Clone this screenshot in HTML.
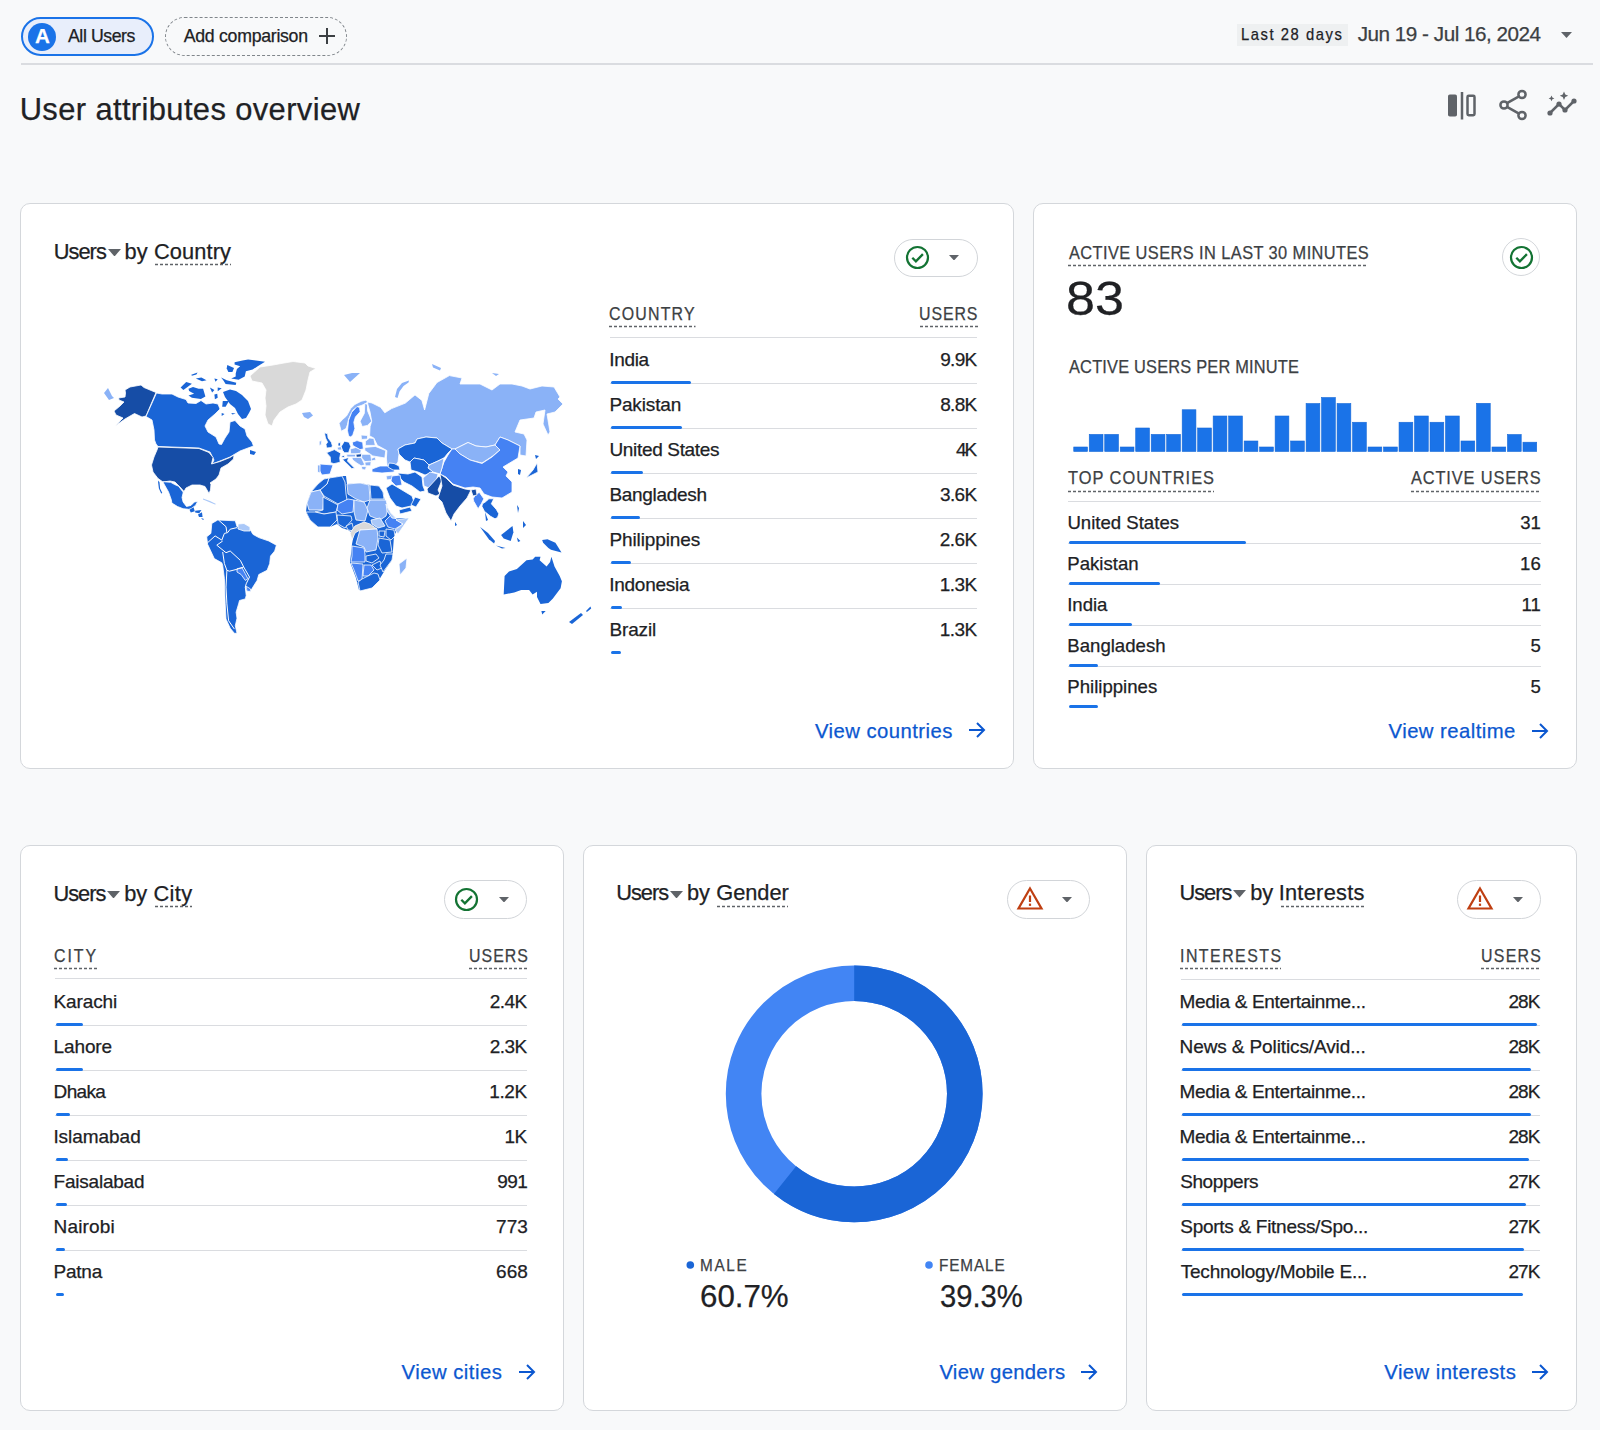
<!DOCTYPE html>
<html><head><meta charset="utf-8"><style>
html,body{margin:0;padding:0}
body{width:1600px;height:1430px;position:relative;overflow:hidden;background:#f8f9fa;font-family:"Liberation Sans",sans-serif}
.t{position:absolute;white-space:nowrap;line-height:1;-webkit-text-stroke:0.25px currentColor}
.r{position:absolute;box-sizing:content-box}
.card{position:absolute;background:#fff;border:1px solid #d4d7db;border-radius:10px}
svg{display:block}
</style></head><body>

<div class="r" style="left:21px;top:17px;width:129px;height:35px;border:2px solid #1a73e8;border-radius:20px;background:#e8eefb"></div>
<div class="r" style="left:28px;top:22.5px;width:28px;height:28px;border-radius:50%;background:#1a73e8"></div>
<div class="t" style="left:34.98px;top:26.00px;font-size:20.60px;color:#fff;font-weight:700;">A</div>
<div class="t" style="left:68.00px;top:28.00px;font-size:17.70px;color:#202124;letter-spacing:-0.423px;">All Users</div>
<div class="r" style="left:165px;top:17px;width:180px;height:37px;border:1.3px dashed #80868b;border-radius:20px"></div>
<div class="t" style="left:183.75px;top:28.00px;font-size:17.70px;color:#202124;letter-spacing:-0.272px;">Add comparison</div>
<svg class="r" style="left:318px;top:27px" width="18" height="18"><path d="M9 1V17M1 9H17" stroke="#3c4043" stroke-width="2"/></svg>
<div class="r" style="left:21px;top:63px;width:1572px;height:2px;background:#dadce0"></div>
<div class="r" style="left:1237px;top:24px;width:111px;height:22px;background:#eef0f1"></div>
<div class="t" style="left:1241.32px;top:26.00px;font-size:16.40px;color:#202124;letter-spacing:1.738px;transform:scaleX(0.9000);transform-origin:0 0;">Last 28 days</div>
<div class="t" style="left:1357.69px;top:24.00px;font-size:20.70px;color:#3c4043;letter-spacing:-0.490px;">Jun 19 - Jul 16, 2024</div>
<svg class="r" style="left:1560.8px;top:32.2px" width="11" height="6"><path d="M0 0H11L5.5 6Z" fill="#5f6368"/></svg>
<div class="t" style="left:19.68px;top:95.00px;font-size:30.90px;color:#202124;letter-spacing:0.381px;">User attributes overview</div>
<svg class="r" style="left:1446px;top:90px" width="32" height="32" viewBox="0 0 32 32"><rect x="2" y="4.5" width="9" height="22" rx="1.8" fill="#5f6368"/><rect x="14.75" y="2" width="2.5" height="27.5" fill="#5f6368"/><rect x="21.5" y="5.75" width="7" height="19.5" rx="1.2" fill="none" stroke="#5f6368" stroke-width="2.5"/></svg>
<svg class="r" style="left:1498px;top:89px" width="30" height="32" viewBox="0 0 30 32"><circle cx="24" cy="5.5" r="3.6" fill="none" stroke="#5f6368" stroke-width="2.5"/><circle cx="6" cy="16" r="3.6" fill="none" stroke="#5f6368" stroke-width="2.5"/><circle cx="24" cy="26.5" r="3.6" fill="none" stroke="#5f6368" stroke-width="2.5"/><path d="M9 14.2L21 7.3M9 17.8L21 24.7" stroke="#5f6368" stroke-width="2.5"/></svg>
<svg class="r" style="left:1546px;top:91px" width="36" height="28" viewBox="0 0 36 28"><path d="M4 22L13 13L19 19L28 10" fill="none" stroke="#5f6368" stroke-width="2.5"/><circle cx="4" cy="22" r="2.6" fill="#5f6368"/><circle cx="13" cy="13" r="2.6" fill="#5f6368"/><circle cx="19" cy="19" r="2.6" fill="#5f6368"/><circle cx="28" cy="10" r="2.6" fill="#5f6368"/><path d="M5.5 4.5l0.9 2 2 0.9-2 0.9-0.9 2-0.9-2-2-0.9 2-0.9z" fill="#5f6368"/><path d="M18 0.5l1.3 2.9 2.9 1.3-2.9 1.3-1.3 2.9-1.3-2.9-2.9-1.3 2.9-1.3z" fill="#5f6368"/></svg>
<div class="card" style="left:20px;top:203px;width:992px;height:564px"></div>
<div class="card" style="left:1033px;top:203px;width:542px;height:564px"></div>
<div class="card" style="left:20px;top:845px;width:542px;height:564px"></div>
<div class="card" style="left:583px;top:845px;width:542px;height:564px"></div>
<div class="card" style="left:1146px;top:845px;width:429px;height:564px"></div>
<svg class="r" style="left:0;top:0" width="1600" height="1430"><polygon points="311.0,492.0 307.0,503.0 306.0,512.0 310.0,520.0 318.0,527.0 330.0,527.0 337.0,524.0 342.0,528.0 348.0,530.0 354.0,534.0 352.0,544.0 351.0,554.0 350.0,562.0 356.0,578.0 359.0,590.0 370.0,588.0 379.0,580.0 385.0,570.0 392.0,560.0 393.0,550.0 394.0,536.0 396.0,532.0 409.0,518.0 396.0,518.5 391.4,514.0 388.0,508.5 384.5,499.6 383.0,492.0 379.0,486.0 370.0,485.0 360.0,483.0 347.0,484.0 346.0,476.0 342.0,476.0 329.0,478.0 324.0,479.0 318.0,484.0" fill="#1a65d6"/><polygon points="125.0,390.0 130.0,387.0 141.0,385.0 144.0,387.5 156.0,392.5 146.0,416.0 142.0,417.0 134.5,413.5 125.0,419.0 115.0,426.0 123.0,418.0 116.0,415.0 114.0,411.0 120.0,406.0 124.0,402.0 119.0,400.0 118.5,398.0 125.0,397.0 125.5,393.0" fill="#164da6" stroke="#fff" stroke-width="0.8" stroke-linejoin="round"/><polygon points="156.5,393.0 162.0,394.0 172.0,394.0 178.0,397.0 186.0,399.5 188.0,403.0 196.0,403.5 201.0,400.5 206.0,404.0 213.0,403.0 218.0,404.0 220.0,409.0 215.0,414.0 208.0,420.0 205.0,426.0 208.0,432.0 216.0,437.0 219.0,444.0 221.5,444.5 225.0,438.0 229.0,432.0 230.0,422.0 235.0,420.5 240.0,426.0 245.0,429.0 247.0,436.0 252.0,442.0 253.5,446.0 248.0,448.0 240.0,451.0 235.0,454.0 230.0,457.0 220.0,461.0 212.0,464.0 214.0,460.0 210.0,452.0 199.0,448.0 158.0,446.5 156.0,444.0 154.5,440.0 154.0,430.0 152.0,420.0 146.0,416.5" fill="#1a65d6" stroke="#fff" stroke-width="0.8" stroke-linejoin="round"/><polygon points="158.0,447.0 199.0,448.5 209.0,452.5 213.0,457.5 211.5,464.0 220.0,461.5 230.0,457.5 234.0,455.0 233.5,459.0 228.0,464.0 221.0,468.0 219.0,475.0 216.0,479.0 210.0,483.0 211.0,484.0 210.5,490.0 209.0,493.5 207.0,490.0 205.0,486.5 200.0,485.0 192.0,485.0 186.0,488.0 184.0,491.5 180.0,487.0 175.0,482.0 170.0,481.0 163.0,482.0 158.0,478.5 153.0,472.0 151.5,465.0 154.0,457.0 157.0,450.0" fill="#164da6" stroke="#fff" stroke-width="0.8" stroke-linejoin="round"/><polygon points="162.9,481.7 170.7,482.3 174.7,484.6 178.6,486.2 182.0,490.7 183.1,491.9 183.1,493.0 182.0,497.5 183.1,502.0 186.5,506.5 191.0,505.4 194.4,502.0 197.7,501.4 195.5,505.4 191.0,508.7 188.7,509.3 183.1,508.7 177.5,506.5 171.9,503.1 171.3,499.7 168.5,491.9 164.0,484.0" fill="#1a65d6" stroke="#fff" stroke-width="0.8" stroke-linejoin="round"/><polygon points="158.4,480.6 159.5,482.3 160.1,488.5 162.3,493.0 161.2,493.6 158.9,488.5 158.1,482.3" fill="#1a65d6"/><polygon points="189.5,509.8 193.5,507.2 194.8,511.2 190.8,512.6" fill="#1a65d6"/><polygon points="195.2,510.8 201.5,510.0 199.2,513.2 195.2,512.6" fill="#1a65d6"/><polygon points="198.0,514.6 202.0,512.3 202.6,517.0 199.0,517.0" fill="#1a65d6"/><polygon points="201.0,518.0 204.0,519.0 203.0,520.0" fill="#1a65d6"/><polygon points="203.0,498.5 210.0,501.0 216.0,504.0 215.0,504.6 209.0,502.0 203.0,499.4" fill="#aac8f8"/><polygon points="250.0,376.0 260.0,367.0 273.0,365.0 284.0,363.0 293.0,361.5 305.0,363.0 308.0,366.0 316.0,368.5 310.0,372.0 308.0,380.0 306.0,390.0 302.0,400.0 296.0,404.0 288.0,407.0 280.0,412.0 274.0,420.0 272.0,426.0 268.0,424.0 265.0,415.0 266.0,406.0 265.0,398.0 266.0,390.0 262.0,383.0 252.0,381.0" fill="#d9d9d9" stroke="#fff" stroke-width="0.8" stroke-linejoin="round"/><polygon points="234.6,362.3 242.5,360.6 248.1,359.5 265.0,361.7 257.7,366.2 252.6,369.6 245.9,371.3 244.7,376.4 238.6,379.7 231.2,378.6 235.7,376.4 235.7,373.6 236.9,369.1 240.2,366.2 234.6,364.6" fill="#1a65d6"/><polygon points="227.3,365.1 234.0,367.9 232.4,371.9 228.4,371.9 226.7,368.5" fill="#1a65d6"/><polygon points="223.0,392.0 230.0,389.5 236.0,391.0 242.0,395.0 248.0,401.0 251.0,409.0 249.0,413.0 246.0,418.0 242.0,419.0 238.0,414.0 235.0,408.0 230.0,404.0 225.0,397.0" fill="#1a65d6"/><polygon points="188.5,388.7 193.0,387.1 198.6,388.7 203.1,388.7 205.4,396.6 200.9,398.9 191.9,397.7 188.5,395.5 194.1,393.8 189.1,391.0" fill="#1a65d6"/><polygon points="180.6,387.6 186.2,382.0 191.9,383.7 183.4,389.9" fill="#1a65d6"/><polygon points="191.3,374.7 197.5,372.4 196.4,374.6 191.9,375.8" fill="#1a65d6"/><polygon points="195.8,378.6 201.4,377.5 206.5,380.3 202.0,381.2" fill="#1a65d6"/><polygon points="214.4,378.6 217.7,379.2 215.5,381.8" fill="#1a65d6"/><polygon points="221.1,377.5 226.7,380.3 236.3,382.8 235.7,385.0 225.6,384.0 223.6,380.8" fill="#1a65d6"/><polygon points="209.9,387.6 214.4,389.9 212.1,392.5" fill="#1a65d6"/><polygon points="217.7,387.6 221.7,388.2 217.7,391.3" fill="#1a65d6"/><polygon points="214.4,394.4 217.2,393.8 217.7,397.7 214.9,399.2" fill="#1a65d6"/><polygon points="222.8,401.1 229.0,401.1 225.6,406.7 222.2,406.7" fill="#1a65d6"/><polygon points="221.7,412.9 224.5,414.1 221.7,415.9" fill="#1a65d6"/><polygon points="231.2,412.9 235.7,413.5 232.4,414.6" fill="#1a65d6"/><polygon points="250.0,450.0 256.0,452.0 254.0,455.0 250.0,454.0" fill="#1a65d6"/><polygon points="104.0,393.0 108.0,388.0 112.0,396.0 114.0,398.0 109.0,400.0" fill="#8ab2f7"/><polygon points="211.8,523.4 217.7,520.0 235.3,520.8 237.0,526.7 240.3,525.0 249.5,528.4 252.9,534.3 258.8,537.6 268.8,541.0 276.4,545.2 274.7,551.0 270.5,556.1 269.7,563.6 267.1,570.3 258.8,574.5 257.1,580.4 252.9,587.1 250.4,591.3 246.2,590.5 245.3,587.1 246.2,595.5 245.3,598.9 239.5,600.5 238.6,603.9 236.1,612.3 237.0,618.2 235.3,625.7 237.0,633.3 234.4,633.3 230.2,628.2 226.0,619.0 225.2,603.9 224.4,578.7 222.7,565.3 221.8,562.8 214.3,558.6 207.6,544.3 206.7,536.8 210.9,533.4" fill="#1a65d6" stroke="#fff" stroke-width="0.8" stroke-linejoin="round"/><polygon points="238.0,524.0 244.0,523.5 250.0,527.0 250.0,531.0 244.0,531.0 238.0,529.0" fill="#aac8f8" stroke="#fff" stroke-width="0.8" stroke-linejoin="round"/><polygon points="237.0,568.7 242.0,567.8 245.3,573.7 247.9,578.7 245.3,580.4 241.1,574.5 237.0,572.0" fill="#4582f3" stroke="#fff" stroke-width="0.8" stroke-linejoin="round"/><polygon points="246.2,586.3 250.4,588.8 250.8,591.3 247.0,591.3" fill="#4582f3" stroke="#fff" stroke-width="0.8" stroke-linejoin="round"/><polygon points="339.1,423.3 342.3,419.7 346.5,416.0 350.7,408.6 354.9,404.4 361.2,401.3 365.4,400.2 368.0,401.8 364.8,403.9 361.2,405.5 358.0,406.5 352.8,410.2 348.6,419.1 347.5,424.4 346.0,428.6 341.2,431.2" fill="#8ab2f7" stroke="#fff" stroke-width="0.8" stroke-linejoin="round"/><polygon points="347.5,430.7 348.6,420.2 351.7,412.3 357.0,406.5 359.6,407.6 360.1,411.8 355.4,417.0 353.8,422.3 354.9,428.6 352.8,434.9 350.7,437.0 348.6,435.9" fill="#4582f3" stroke="#fff" stroke-width="0.8" stroke-linejoin="round"/><polygon points="360.1,421.2 364.3,413.4 364.8,403.4 367.5,404.4 367.5,410.7 370.1,417.0 371.7,421.2 367.5,425.4 362.2,426.5" fill="#8ab2f7" stroke="#fff" stroke-width="0.8" stroke-linejoin="round"/><polygon points="324.4,432.8 327.6,433.8 328.1,438.0 331.3,442.2 332.3,445.4 331.8,447.5 326.5,448.0 326.0,444.3 327.6,442.2 325.5,438.0" fill="#1a65d6" stroke="#fff" stroke-width="0.8" stroke-linejoin="round"/><polygon points="319.2,441.2 321.8,440.6 321.3,444.8 319.2,445.4" fill="#8ab2f7" stroke="#fff" stroke-width="0.8" stroke-linejoin="round"/><polygon points="367.5,402.0 372.0,403.0 380.6,407.3 384.8,412.8 391.6,408.6 405.4,403.1 415.0,394.9 421.9,400.4 424.6,410.0 428.8,393.5 437.0,382.5 449.4,375.6 462.0,378.0 460.0,384.0 480.0,384.0 492.0,390.0 500.0,384.0 512.0,384.0 522.0,386.0 530.0,389.0 542.0,386.0 554.0,387.0 560.0,397.0 558.0,399.0 563.0,404.0 555.0,412.0 547.0,414.0 550.0,432.0 548.0,435.0 543.0,424.0 545.0,410.0 536.0,412.0 534.0,418.0 520.0,420.0 515.0,432.0 524.0,434.0 527.0,440.0 526.0,456.0 520.0,455.0 520.0,446.0 508.0,440.0 500.0,437.0 495.0,445.0 486.0,447.0 476.0,446.0 468.0,442.5 455.0,449.0 452.0,449.0 442.0,443.0 437.0,438.0 426.0,437.0 417.0,439.0 415.0,443.0 405.0,445.0 398.0,449.0 399.0,454.0 398.0,462.0 392.0,470.0 387.4,468.5 386.4,458.0 386.9,450.6 377.4,445.4 373.8,438.0 369.6,435.9 370.1,426.5 371.7,421.2 370.0,412.0 368.0,405.0" fill="#8ab2f7" stroke="#fff" stroke-width="0.8" stroke-linejoin="round"/><polygon points="432.0,364.0 441.0,368.0 440.0,370.5 433.0,367.5" fill="#8ab2f7"/><polygon points="492.0,373.0 499.0,374.0 496.0,376.0" fill="#8ab2f7"/><polygon points="344.0,375.0 352.0,373.0 360.0,373.0 350.0,382.0" fill="#8ab2f7"/><polygon points="302.0,413.0 310.0,412.0 313.0,415.5 308.0,419.0 304.0,417.0" fill="#8ab2f7"/><polygon points="341.2,446.4 344.4,441.2 349.1,442.2 350.7,446.4 348.6,452.7 344.4,452.7 342.3,450.1" fill="#1a65d6" stroke="#fff" stroke-width="0.8" stroke-linejoin="round"/><polygon points="326.5,452.7 334.4,449.6 340.7,453.2 339.7,458.0 340.2,462.2 333.9,463.7 330.7,462.7 330.2,456.9" fill="#1a65d6" stroke="#fff" stroke-width="0.8" stroke-linejoin="round"/><polygon points="352.3,442.2 357.0,440.6 362.7,442.2 363.3,449.0 359.6,449.6 352.8,445.4" fill="#4582f3" stroke="#fff" stroke-width="0.8" stroke-linejoin="round"/><polygon points="365.4,441.2 369.6,438.0 373.8,438.5 375.3,445.4 365.4,445.4" fill="#8ab2f7" stroke="#fff" stroke-width="0.8" stroke-linejoin="round"/><polygon points="364.8,447.5 375.3,446.4 385.8,450.6 384.8,458.0 372.7,455.9 364.8,450.6" fill="#8ab2f7" stroke="#fff" stroke-width="0.8" stroke-linejoin="round"/><polygon points="342.3,459.5 348.6,457.4 347.5,461.1 354.9,468.5 351.7,468.5 345.4,462.2" fill="#1a65d6" stroke="#fff" stroke-width="0.8" stroke-linejoin="round"/><polygon points="320.0,464.0 333.0,465.0 330.0,474.0 322.0,475.0 319.0,470.0" fill="#4582f3" stroke="#fff" stroke-width="0.8" stroke-linejoin="round"/><polygon points="317.5,465.0 320.0,465.0 320.0,473.0 317.5,472.0" fill="#8ab2f7" stroke="#fff" stroke-width="0.8" stroke-linejoin="round"/><polygon points="398.0,449.0 405.0,445.0 415.0,443.0 417.0,439.0 426.0,437.0 437.0,438.0 442.0,443.0 452.0,449.0 448.0,453.0 444.0,458.0 438.0,461.0 429.0,465.0 424.0,460.0 414.0,458.0 410.0,462.0 405.0,460.0 399.0,454.0" fill="#1a65d6" stroke="#fff" stroke-width="0.8" stroke-linejoin="round"/><polygon points="455.0,449.0 468.0,442.5 476.0,446.0 486.0,447.0 495.0,445.0 500.0,450.0 492.0,456.5 482.0,463.0 470.0,460.0 460.0,454.0" fill="#8ab2f7" stroke="#fff" stroke-width="0.8" stroke-linejoin="round"/><polygon points="452.0,449.0 455.0,449.0 460.0,454.0 470.0,460.0 482.0,463.5 492.0,457.0 500.0,450.0 495.0,445.0 500.0,437.0 508.0,440.0 520.0,446.0 518.0,458.0 508.0,464.0 503.0,467.0 508.0,472.0 506.0,476.0 512.0,482.0 512.0,492.0 502.0,498.0 492.0,497.0 484.0,494.0 480.0,488.0 473.0,487.0 465.0,488.0 453.0,484.0 446.0,477.0 440.0,474.0 442.0,468.0 444.0,462.0 448.0,455.0" fill="#4582f3" stroke="#fff" stroke-width="0.8" stroke-linejoin="round"/><polygon points="429.0,465.0 438.0,461.0 444.0,458.0 442.0,468.0 440.0,474.0 433.0,472.0 428.0,468.0" fill="#8ab2f7" stroke="#fff" stroke-width="0.8" stroke-linejoin="round"/><polygon points="410.0,462.0 414.0,458.0 424.0,460.0 429.0,465.0 428.0,468.0 433.0,472.0 425.0,475.0 418.0,472.0 411.0,470.0" fill="#1a65d6" stroke="#fff" stroke-width="0.8" stroke-linejoin="round"/><polygon points="423.0,478.0 430.0,472.0 438.0,474.0 436.0,482.0 429.0,488.0 424.0,486.0" fill="#8ab2f7" stroke="#fff" stroke-width="0.8" stroke-linejoin="round"/><polygon points="427.0,489.0 439.0,476.0 442.0,480.0 438.0,490.0 440.0,494.0 436.0,496.0 428.0,493.0" fill="#164da6" stroke="#fff" stroke-width="0.8" stroke-linejoin="round"/><polygon points="440.0,474.0 446.0,478.0 453.0,485.0 465.0,489.0 471.0,490.0 467.0,498.0 460.0,506.0 454.0,514.0 451.0,521.0 446.0,513.0 442.0,502.0 438.0,498.0 440.0,492.0 442.0,486.0" fill="#164da6" stroke="#fff" stroke-width="0.8" stroke-linejoin="round"/><polygon points="398.0,473.0 408.0,474.0 415.0,472.0 422.0,477.0 423.0,486.0 425.0,491.0 420.0,492.0 412.0,486.0 404.0,482.0 399.0,477.0" fill="#1a65d6" stroke="#fff" stroke-width="0.8" stroke-linejoin="round"/><polygon points="386.0,488.0 392.0,484.0 402.0,490.0 412.0,496.0 414.0,502.0 411.0,506.0 402.0,508.0 396.0,506.0 390.0,498.0" fill="#1a65d6" stroke="#fff" stroke-width="0.8" stroke-linejoin="round"/><polygon points="399.0,510.0 410.0,507.0 412.0,511.0 400.0,514.0" fill="#1a65d6" stroke="#fff" stroke-width="0.8" stroke-linejoin="round"/><polygon points="415.0,497.0 421.0,499.0 416.0,507.0 411.0,505.0" fill="#1a65d6" stroke="#fff" stroke-width="0.8" stroke-linejoin="round"/><polygon points="372.0,469.0 380.0,466.0 390.0,466.0 395.0,469.0 394.0,472.0 382.0,473.0 372.0,472.0" fill="#4582f3" stroke="#fff" stroke-width="0.8" stroke-linejoin="round"/><polygon points="386.0,476.0 392.0,475.0 393.0,479.0 387.0,480.0" fill="#8ab2f7" stroke="#fff" stroke-width="0.8" stroke-linejoin="round"/><polygon points="392.0,476.0 400.0,475.0 402.0,485.0 396.0,486.0 391.0,481.0" fill="#4582f3" stroke="#fff" stroke-width="0.8" stroke-linejoin="round"/><polygon points="370.0,485.0 379.0,486.0 383.0,492.0 384.0,499.0 371.0,499.0" fill="#1a65d6" stroke="#fff" stroke-width="0.8" stroke-linejoin="round"/><polygon points="347.0,484.0 360.0,483.0 369.0,485.0 370.0,500.0 364.0,502.0 356.0,499.0 348.0,494.0" fill="#8ab2f7" stroke="#fff" stroke-width="0.8" stroke-linejoin="round"/><polygon points="329.0,478.0 342.0,476.0 345.0,482.0 346.0,494.0 347.0,500.0 338.0,504.0 324.0,496.0 320.0,490.0 327.0,484.0" fill="#1a65d6" stroke="#fff" stroke-width="0.8" stroke-linejoin="round"/><polygon points="318.0,484.0 324.0,479.0 329.0,478.0 327.0,484.0 320.0,490.0 311.0,492.0" fill="#1a65d6" stroke="#fff" stroke-width="0.8" stroke-linejoin="round"/><polygon points="307.0,503.0 311.0,492.0 320.0,490.0 324.0,497.0 323.0,510.0 309.0,510.0" fill="#8ab2f7" stroke="#fff" stroke-width="0.8" stroke-linejoin="round"/><polygon points="323.0,497.0 338.0,505.0 336.0,512.0 324.0,514.0 315.0,512.0 323.0,510.0" fill="#1a65d6" stroke="#fff" stroke-width="0.8" stroke-linejoin="round"/><polygon points="338.0,504.0 348.0,499.0 354.0,500.0 353.0,512.0 342.0,514.0 337.0,510.0" fill="#4582f3" stroke="#fff" stroke-width="0.8" stroke-linejoin="round"/><polygon points="354.0,500.0 364.0,502.0 368.0,510.0 365.0,521.0 356.0,520.0 354.0,512.0" fill="#8ab2f7" stroke="#fff" stroke-width="0.8" stroke-linejoin="round"/><polygon points="370.0,500.0 386.0,500.0 388.0,508.0 386.0,516.0 380.0,520.0 370.0,516.0 367.0,508.0" fill="#8ab2f7" stroke="#fff" stroke-width="0.8" stroke-linejoin="round"/><polygon points="371.0,520.0 380.0,518.0 385.0,526.0 378.0,528.0 372.0,524.0" fill="#aac8f8" stroke="#fff" stroke-width="0.8" stroke-linejoin="round"/><polygon points="385.0,521.0 392.0,514.0 397.0,520.0 403.0,524.0 395.0,529.0 388.0,527.0" fill="#4582f3" stroke="#fff" stroke-width="0.8" stroke-linejoin="round"/><polygon points="396.0,520.0 409.0,518.0 398.0,534.0 395.0,530.0 403.0,524.0" fill="#aac8f8" stroke="#fff" stroke-width="0.8" stroke-linejoin="round"/><polygon points="306.0,512.0 315.0,512.0 324.0,514.0 336.0,512.0 337.0,520.0 330.0,527.0 318.0,527.0 310.0,520.0" fill="#1a65d6" stroke="#fff" stroke-width="0.8" stroke-linejoin="round"/><polygon points="337.0,515.0 351.0,516.0 352.0,520.0 345.0,528.0 338.0,524.0" fill="#1a65d6" stroke="#fff" stroke-width="0.8" stroke-linejoin="round"/><polygon points="346.0,526.0 352.0,523.0 354.0,531.0 348.0,530.0" fill="#1a65d6" stroke="#fff" stroke-width="0.8" stroke-linejoin="round"/><polygon points="355.0,526.0 364.0,522.0 370.0,524.0 377.0,529.0 360.0,530.0 355.0,533.0 352.0,540.0 350.0,533.0" fill="#d9d9d9" stroke="#fff" stroke-width="0.8" stroke-linejoin="round"/><polygon points="360.0,530.0 377.0,529.0 378.0,538.0 376.0,550.0 366.0,552.0 364.0,547.0 356.0,544.0" fill="#8ab2f7" stroke="#fff" stroke-width="0.8" stroke-linejoin="round"/><polygon points="352.0,546.0 364.0,548.0 365.0,554.0 365.0,562.0 351.0,562.0 352.0,556.0" fill="#4582f3" stroke="#fff" stroke-width="0.8" stroke-linejoin="round"/><polygon points="351.0,563.0 363.0,564.0 362.0,580.0 358.0,581.0 354.0,570.0" fill="#4582f3" stroke="#fff" stroke-width="0.8" stroke-linejoin="round"/><polygon points="364.0,565.0 371.0,565.0 374.0,570.0 368.0,576.0 363.0,576.0" fill="#4582f3" stroke="#fff" stroke-width="0.8" stroke-linejoin="round"/><polygon points="358.0,582.0 362.0,579.0 374.0,573.0 378.0,574.0 380.0,580.0 372.0,588.0 360.0,591.0" fill="#1a65d6" stroke="#fff" stroke-width="0.8" stroke-linejoin="round"/><polygon points="366.0,556.0 376.0,554.0 379.0,558.0 372.0,563.0 366.0,561.0" fill="#1a65d6" stroke="#fff" stroke-width="0.8" stroke-linejoin="round"/><polygon points="372.0,565.0 380.0,561.0 382.0,568.0 377.0,570.0" fill="#1a65d6" stroke="#fff" stroke-width="0.8" stroke-linejoin="round"/><polygon points="386.0,554.0 393.0,554.0 392.0,560.0 383.0,572.0 380.0,565.0 384.0,560.0" fill="#1a65d6" stroke="#fff" stroke-width="0.8" stroke-linejoin="round"/><polygon points="379.0,538.0 390.0,540.0 392.0,552.0 382.0,553.0 378.0,545.0" fill="#1a65d6" stroke="#fff" stroke-width="0.8" stroke-linejoin="round"/><polygon points="386.0,529.0 394.0,530.0 395.0,536.0 391.0,540.0 386.0,536.0" fill="#1a65d6" stroke="#fff" stroke-width="0.8" stroke-linejoin="round"/><polygon points="379.0,531.0 385.0,531.0 384.0,537.0 379.0,536.0" fill="#1a65d6" stroke="#fff" stroke-width="0.8" stroke-linejoin="round"/><polygon points="399.0,564.0 407.0,558.0 406.0,568.0 400.0,575.0" fill="#8ab2f7" stroke="#fff" stroke-width="0.8" stroke-linejoin="round"/><polygon points="473.1,498.8 476.0,494.0 479.4,492.5 483.8,498.8 481.3,503.8 478.1,508.8 473.8,501.3" fill="#4582f3" stroke="#fff" stroke-width="0.8" stroke-linejoin="round"/><polygon points="482.5,503.8 486.3,501.3 488.8,498.8 493.8,498.8 491.3,503.8 496.3,509.4 498.8,513.8 497.5,517.5 495.0,518.8 490.6,516.3 484.4,511.3 481.9,506.3" fill="#1a65d6" stroke="#fff" stroke-width="0.8" stroke-linejoin="round"/><polygon points="485.0,512.0 488.0,520.0 486.0,521.0" fill="#1a65d6"/><polygon points="533.0,470.0 537.0,463.0 538.0,472.0 526.0,478.0" fill="#1a65d6" stroke="#fff" stroke-width="0.8" stroke-linejoin="round"/><polygon points="535.0,455.0 539.0,456.0 536.0,459.0" fill="#1a65d6"/><polygon points="518.0,469.0 521.0,470.0 520.0,475.0 518.0,474.0" fill="#1a65d6"/><polygon points="517.0,505.0 519.0,508.0 518.0,513.0" fill="#1a65d6"/><polygon points="523.0,521.0 526.0,525.0 523.0,528.0" fill="#1a65d6"/><polygon points="480.1,527.0 488.0,533.1 495.0,541.0 494.1,543.6 488.9,539.2" fill="#1a65d6"/><polygon points="495.9,545.4 505.5,548.0 502.0,548.5" fill="#1a65d6"/><polygon points="501.1,534.9 512.5,526.1 513.4,532.2 510.7,541.0 503.7,538.4" fill="#1a65d6"/><polygon points="516.9,537.5 520.4,541.0 518.0,542.0" fill="#1a65d6"/><polygon points="542.2,540.1 547.5,539.2 555.4,542.7 561.5,552.4 551.0,549.7 548.4,548.0 543.1,542.7" fill="#1a65d6"/><polygon points="455.0,522.0 457.0,525.0 455.0,526.0" fill="#1a65d6"/><polygon points="503.7,594.4 504.6,576.0 509.0,571.6 516.9,569.0 526.5,560.2 532.6,559.4 535.2,556.7 540.5,556.7 539.6,560.2 546.6,566.4 550.1,562.0 551.4,556.7 554.5,566.4 559.7,576.0 561.9,581.2 560.6,588.2 552.7,598.7 548.4,603.1 540.5,604.0 537.0,597.0 537.0,591.7 532.6,594.4 529.1,590.0 521.2,590.0 514.2,592.6" fill="#1a65d6"/><polygon points="541.4,611.0 545.7,611.0 542.2,614.5" fill="#1a65d6"/><polygon points="569.0,622.0 581.0,613.0 583.0,615.0 572.0,624.0" fill="#1a65d6"/><polygon points="586.0,611.0 590.4,606.6 591.2,608.4 586.9,611.9" fill="#1a65d6"/><polygon points="338.0,443.0 340.5,442.5 340.5,446.0 338.0,446.0" fill="#1a65d6" stroke="#fff" stroke-width="0.8" stroke-linejoin="round"/><polygon points="337.0,447.5 341.0,446.5 342.0,450.0 338.0,450.0" fill="#8ab2f7" stroke="#fff" stroke-width="0.8" stroke-linejoin="round"/><polygon points="361.0,435.0 367.5,435.5 367.5,439.0 361.5,439.5" fill="#8ab2f7" stroke="#fff" stroke-width="0.8" stroke-linejoin="round"/><polygon points="341.8,455.9 344.5,455.5 344.5,457.5 341.8,457.5" fill="#1a65d6" stroke="#fff" stroke-width="0.8" stroke-linejoin="round"/><polygon points="370.0,459.0 375.0,457.0 376.0,460.0 371.0,461.0" fill="#8ab2f7" stroke="#fff" stroke-width="0.8" stroke-linejoin="round"/><polygon points="389.0,463.0 394.0,463.5 399.0,466.0 400.0,470.0 393.0,470.0 388.0,467.0" fill="#1a65d6" stroke="#fff" stroke-width="0.8" stroke-linejoin="round"/><polygon points="471.0,490.0 476.0,489.0 477.0,495.0 473.0,496.0" fill="#164da6" stroke="#fff" stroke-width="0.8" stroke-linejoin="round"/><polygon points="350.2,449.0 355.9,447.5 361.2,450.1 360.6,453.2 355.9,453.8 350.7,453.8" fill="#8ab2f7" stroke="#fff" stroke-width="0.8" stroke-linejoin="round"/><polygon points="346.5,454.3 355.9,454.3 355.4,456.9 347.0,456.9" fill="#8ab2f7" stroke="#fff" stroke-width="0.8" stroke-linejoin="round"/><polygon points="355.9,454.3 361.7,453.8 361.2,456.9 356.4,457.4" fill="#164da6" stroke="#fff" stroke-width="0.8" stroke-linejoin="round"/><polygon points="351.7,457.4 361.2,457.4 364.8,464.8 361.2,465.8 357.0,463.2 352.8,460.1" fill="#8ab2f7" stroke="#fff" stroke-width="0.8" stroke-linejoin="round"/><polygon points="361.7,454.3 370.6,454.3 371.7,461.1 364.8,461.6 361.7,457.9" fill="#8ab2f7" stroke="#fff" stroke-width="0.8" stroke-linejoin="round"/><polygon points="364.8,462.2 371.1,461.6 370.6,465.8 365.4,465.8" fill="#8ab2f7" stroke="#fff" stroke-width="0.8" stroke-linejoin="round"/><polygon points="361.2,466.4 366.4,466.4 365.4,470.0 362.2,469.5" fill="#8ab2f7" stroke="#fff" stroke-width="0.8" stroke-linejoin="round"/><polygon points="386.0,504.0 388.0,508.5 391.4,514.0 396.0,518.5 392.0,518.0 387.0,511.0" fill="#aac8f8" stroke="#fff" stroke-width="0.8" stroke-linejoin="round"/><polygon points="395.0,397.0 397.0,389.0 402.0,383.0 409.0,380.5 408.5,382.5 403.5,386.0 399.5,391.5 397.5,398.0" fill="#8ab2f7"/><polyline points="226.9,570.3 226.0,587.1 226.9,603.9 228.6,620.7 234.4,629.1" fill="none" stroke="#fff" stroke-width="1"/><polyline points="216.8,545.2 226.0,552.7 230.2,551.0 240.3,560.3 243.7,567.0 236.1,569.5 229.4,571.2 226.9,570.3 224.4,563.6 222.7,552.0" fill="none" stroke="#fff" stroke-width="1"/><polyline points="222.7,541.0 216.8,545.2" fill="none" stroke="#fff" stroke-width="1"/><polyline points="207.6,542.7 215.1,535.9 221.8,540.1" fill="none" stroke="#fff" stroke-width="1"/><polyline points="221.8,540.1 224.4,533.4 227.7,532.6 230.2,529.2 237.0,527.6" fill="none" stroke="#fff" stroke-width="1"/><polyline points="218.5,520.0 226.0,526.7 226.9,532.6" fill="none" stroke="#fff" stroke-width="1"/><polyline points="243.7,567.0 249.5,577.0 246.2,583.8 245.3,587.1" fill="none" stroke="#fff" stroke-width="1"/></svg>
<div class="t" style="left:53.87px;top:241.00px;font-size:21.80px;color:#202124;letter-spacing:-1.000px;">Users</div>
<svg class="r" style="left:107.5px;top:248.8px" width="13" height="7.5"><path d="M0 0H13L6.5 7.5Z" fill="#5f6368"/></svg>
<div class="t" style="left:124.58px;top:241.00px;font-size:21.80px;color:#202124;">by</div>
<div class="t" style="left:153.91px;top:241.00px;font-size:21.80px;color:#202124;letter-spacing:0.132px;">Country</div>
<svg class="r" style="left:155.0px;top:263.25px" width="76.0" height="3"><line x1="0" y1="1.5" x2="76.0" y2="1.5" stroke="#5f6368" stroke-width="1.5" stroke-dasharray="3 2"/></svg>
<div class="card" style="left:894px;top:239px;width:82px;height:36px;border-radius:19.0px;background:#fff;border-color:#d2d5d9"></div>
<svg class="r" style="left:905.0px;top:245.2px" width="25.0" height="25.0" viewBox="-12.5 -12.5 25.0 25.0"><circle r="10.5" fill="none" stroke="#137333" stroke-width="2.2"/><path d="M-5.2 0.3L-1.6 3.9L5.4 -3.4" fill="none" stroke="#137333" stroke-width="2.3"/></svg>
<svg class="r" style="left:949.0px;top:254.75px" width="10" height="5.5"><path d="M0 0H10L5.0 5.5Z" fill="#5f6368"/></svg>
<div class="t" style="left:609.20px;top:306.00px;font-size:17.70px;color:#3c4043;letter-spacing:1.326px;transform:scaleX(0.9000);transform-origin:0 0;">COUNTRY</div>
<div class="t" style="left:919.31px;top:306.00px;font-size:17.70px;color:#3c4043;letter-spacing:0.981px;transform:scaleX(0.9000);transform-origin:0 0;">USERS</div>
<svg class="r" style="left:609px;top:325.0px" width="86.5" height="3"><line x1="0" y1="1.5" x2="86.5" y2="1.5" stroke="#5f6368" stroke-width="1.5" stroke-dasharray="3 2"/></svg>
<svg class="r" style="left:919.5px;top:325.0px" width="58.5" height="3"><line x1="0" y1="1.5" x2="58.5" y2="1.5" stroke="#5f6368" stroke-width="1.5" stroke-dasharray="3 2"/></svg>
<div class="r" style="left:610px;top:337px;width:367px;height:1px;background:#dadce0"></div>
<div class="t" style="left:609.19px;top:350.00px;font-size:19.00px;color:#202124;letter-spacing:-0.306px;">India</div>
<div class="t" style="left:940.25px;top:350.00px;font-size:19.00px;color:#202124;letter-spacing:-0.700px;">9.9K</div>
<div class="r" style="left:610px;top:383px;width:367px;height:1px;background:#dadce0"></div>
<div class="r" style="left:611px;top:381px;width:80px;height:3px;background:#1a73e8;border-radius:1.5px"></div>
<div class="t" style="left:609.38px;top:395.00px;font-size:19.00px;color:#202124;letter-spacing:-0.130px;">Pakistan</div>
<div class="t" style="left:940.25px;top:395.00px;font-size:19.00px;color:#202124;letter-spacing:-0.700px;">8.8K</div>
<div class="r" style="left:610px;top:428px;width:367px;height:1px;background:#dadce0"></div>
<div class="r" style="left:611px;top:426px;width:70.5px;height:3px;background:#1a73e8;border-radius:1.5px"></div>
<div class="t" style="left:609.48px;top:440.00px;font-size:19.00px;color:#202124;letter-spacing:-0.334px;">United States</div>
<div class="t" style="left:955.92px;top:440.00px;font-size:19.00px;color:#202124;letter-spacing:-1.910px;">4K</div>
<div class="r" style="left:610px;top:473px;width:367px;height:1px;background:#dadce0"></div>
<div class="r" style="left:611px;top:471px;width:32.299999999999955px;height:3px;background:#1a73e8;border-radius:1.5px"></div>
<div class="t" style="left:609.38px;top:485.00px;font-size:19.00px;color:#202124;letter-spacing:-0.307px;">Bangladesh</div>
<div class="t" style="left:939.94px;top:485.00px;font-size:19.00px;color:#202124;letter-spacing:-0.598px;">3.6K</div>
<div class="r" style="left:610px;top:518px;width:367px;height:1px;background:#dadce0"></div>
<div class="r" style="left:611px;top:516px;width:29px;height:3px;background:#1a73e8;border-radius:1.5px"></div>
<div class="t" style="left:609.38px;top:530.00px;font-size:19.00px;color:#202124;letter-spacing:-0.098px;">Philippines</div>
<div class="t" style="left:939.75px;top:530.00px;font-size:19.00px;color:#202124;letter-spacing:-0.535px;">2.6K</div>
<div class="r" style="left:610px;top:563px;width:367px;height:1px;background:#dadce0"></div>
<div class="r" style="left:611px;top:561px;width:20.399999999999977px;height:3px;background:#1a73e8;border-radius:1.5px"></div>
<div class="t" style="left:609.19px;top:575.00px;font-size:19.00px;color:#202124;letter-spacing:-0.257px;">Indonesia</div>
<div class="t" style="left:939.78px;top:575.00px;font-size:19.00px;color:#202124;letter-spacing:-0.543px;">1.3K</div>
<div class="r" style="left:610px;top:608px;width:367px;height:1px;background:#dadce0"></div>
<div class="r" style="left:611px;top:606px;width:10.799999999999955px;height:3px;background:#1a73e8;border-radius:1.5px"></div>
<div class="t" style="left:609.38px;top:620.00px;font-size:19.00px;color:#202124;letter-spacing:-0.109px;">Brazil</div>
<div class="t" style="left:939.78px;top:620.00px;font-size:19.00px;color:#202124;letter-spacing:-0.543px;">1.3K</div>
<div class="r" style="left:611px;top:651px;width:10.299999999999955px;height:3px;background:#1a73e8;border-radius:1.5px"></div>
<div class="t" style="left:814.90px;top:721.00px;font-size:20.30px;color:#0b57d0;letter-spacing:0.459px;">View countries</div>
<svg class="r" style="left:967.5px;top:721.3px" width="18" height="18" viewBox="0 0 18 18"><path d="M1 9H16M9 2L16 9L9 16" fill="none" stroke="#0b57d0" stroke-width="2"/></svg>
<div class="t" style="left:1068.50px;top:244.00px;font-size:18.20px;color:#3c4043;letter-spacing:0.468px;transform:scaleX(0.9000);transform-origin:0 0;">ACTIVE USERS IN LAST 30 MINUTES</div>
<svg class="r" style="left:1068px;top:263.8px" width="300" height="3"><line x1="0" y1="1.5" x2="300" y2="1.5" stroke="#5f6368" stroke-width="1.5" stroke-dasharray="3 2"/></svg>
<div class="t" style="left:1066.16px;top:275.00px;font-size:47.50px;color:#202124;transform:scaleX(1.0968);transform-origin:0 0;">83</div>
<div class="card" style="left:1502px;top:238px;width:36px;height:36px;border-radius:50%"></div>
<svg class="r" style="left:1508.5px;top:244.5px" width="25.0" height="25.0" viewBox="-12.5 -12.5 25.0 25.0"><circle r="10.5" fill="none" stroke="#137333" stroke-width="2.2"/><path d="M-5.2 0.3L-1.6 3.9L5.4 -3.4" fill="none" stroke="#137333" stroke-width="2.3"/></svg>
<div class="t" style="left:1068.50px;top:358.00px;font-size:18.20px;color:#3c4043;letter-spacing:0.219px;transform:scaleX(0.9000);transform-origin:0 0;">ACTIVE USERS PER MINUTE</div>
<svg class="r" style="left:0;top:0" width="1600" height="1430"><rect x="1073.75" y="447" width="13.75" height="4.50" fill="#1a73e8" stroke="#1669d8" stroke-width="0.6"/><rect x="1089.24" y="434.4" width="13.75" height="17.10" fill="#1a73e8" stroke="#1669d8" stroke-width="0.6"/><rect x="1104.73" y="434.4" width="13.75" height="17.10" fill="#1a73e8" stroke="#1669d8" stroke-width="0.6"/><rect x="1120.22" y="447" width="13.75" height="4.50" fill="#1a73e8" stroke="#1669d8" stroke-width="0.6"/><rect x="1135.71" y="428" width="13.75" height="23.50" fill="#1a73e8" stroke="#1669d8" stroke-width="0.6"/><rect x="1151.20" y="434.4" width="13.75" height="17.10" fill="#1a73e8" stroke="#1669d8" stroke-width="0.6"/><rect x="1166.69" y="434.4" width="13.75" height="17.10" fill="#1a73e8" stroke="#1669d8" stroke-width="0.6"/><rect x="1182.18" y="409.75" width="13.75" height="41.75" fill="#1a73e8" stroke="#1669d8" stroke-width="0.6"/><rect x="1197.67" y="428" width="13.75" height="23.50" fill="#1a73e8" stroke="#1669d8" stroke-width="0.6"/><rect x="1213.16" y="416" width="13.75" height="35.50" fill="#1a73e8" stroke="#1669d8" stroke-width="0.6"/><rect x="1228.65" y="416" width="13.75" height="35.50" fill="#1a73e8" stroke="#1669d8" stroke-width="0.6"/><rect x="1244.14" y="441" width="13.75" height="10.50" fill="#1a73e8" stroke="#1669d8" stroke-width="0.6"/><rect x="1259.63" y="447" width="13.75" height="4.50" fill="#1a73e8" stroke="#1669d8" stroke-width="0.6"/><rect x="1275.12" y="416" width="13.75" height="35.50" fill="#1a73e8" stroke="#1669d8" stroke-width="0.6"/><rect x="1290.61" y="441" width="13.75" height="10.50" fill="#1a73e8" stroke="#1669d8" stroke-width="0.6"/><rect x="1306.10" y="403.5" width="13.75" height="48.00" fill="#1a73e8" stroke="#1669d8" stroke-width="0.6"/><rect x="1321.59" y="397.5" width="13.75" height="54.00" fill="#1a73e8" stroke="#1669d8" stroke-width="0.6"/><rect x="1337.08" y="403.5" width="13.75" height="48.00" fill="#1a73e8" stroke="#1669d8" stroke-width="0.6"/><rect x="1352.57" y="422.25" width="13.75" height="29.25" fill="#1a73e8" stroke="#1669d8" stroke-width="0.6"/><rect x="1368.06" y="447" width="13.75" height="4.50" fill="#1a73e8" stroke="#1669d8" stroke-width="0.6"/><rect x="1383.55" y="447" width="13.75" height="4.50" fill="#1a73e8" stroke="#1669d8" stroke-width="0.6"/><rect x="1399.04" y="422.25" width="13.75" height="29.25" fill="#1a73e8" stroke="#1669d8" stroke-width="0.6"/><rect x="1414.53" y="416" width="13.75" height="35.50" fill="#1a73e8" stroke="#1669d8" stroke-width="0.6"/><rect x="1430.02" y="422.25" width="13.75" height="29.25" fill="#1a73e8" stroke="#1669d8" stroke-width="0.6"/><rect x="1445.51" y="416" width="13.75" height="35.50" fill="#1a73e8" stroke="#1669d8" stroke-width="0.6"/><rect x="1461.00" y="441" width="13.75" height="10.50" fill="#1a73e8" stroke="#1669d8" stroke-width="0.6"/><rect x="1476.49" y="403.3" width="13.75" height="48.20" fill="#1a73e8" stroke="#1669d8" stroke-width="0.6"/><rect x="1491.98" y="447" width="13.75" height="4.50" fill="#1a73e8" stroke="#1669d8" stroke-width="0.6"/><rect x="1507.47" y="434.5" width="13.75" height="17.00" fill="#1a73e8" stroke="#1669d8" stroke-width="0.6"/><rect x="1522.96" y="442.2" width="13.75" height="9.30" fill="#1a73e8" stroke="#1669d8" stroke-width="0.6"/></svg>
<div class="t" style="left:1068.17px;top:469.00px;font-size:18.20px;color:#3c4043;letter-spacing:1.111px;transform:scaleX(0.9000);transform-origin:0 0;">TOP COUNTRIES</div>
<div class="t" style="left:1411.00px;top:469.00px;font-size:18.20px;color:#3c4043;letter-spacing:0.969px;transform:scaleX(0.9000);transform-origin:0 0;">ACTIVE USERS</div>
<svg class="r" style="left:1068px;top:489.6px" width="146" height="3"><line x1="0" y1="1.5" x2="146" y2="1.5" stroke="#5f6368" stroke-width="1.5" stroke-dasharray="3 2"/></svg>
<svg class="r" style="left:1411px;top:489.6px" width="130" height="3"><line x1="0" y1="1.5" x2="130" y2="1.5" stroke="#5f6368" stroke-width="1.5" stroke-dasharray="3 2"/></svg>
<div class="r" style="left:1068px;top:501px;width:473px;height:1px;background:#dadce0"></div>
<div class="t" style="left:1067.40px;top:514.00px;font-size:18.60px;color:#202124;">United States</div>
<div class="t" style="left:1520.19px;top:514.00px;font-size:18.60px;color:#202124;">31</div>
<div class="r" style="left:1068px;top:543px;width:473px;height:1px;background:#dadce0"></div>
<div class="r" style="left:1069px;top:541px;width:176.5px;height:3px;background:#1a73e8;border-radius:1.5px"></div>
<div class="t" style="left:1067.31px;top:555.00px;font-size:18.60px;color:#202124;">Pakistan</div>
<div class="t" style="left:1520.10px;top:555.00px;font-size:18.60px;color:#202124;">16</div>
<div class="r" style="left:1068px;top:584px;width:473px;height:1px;background:#dadce0"></div>
<div class="r" style="left:1069px;top:582px;width:91.40000000000009px;height:3px;background:#1a73e8;border-radius:1.5px"></div>
<div class="t" style="left:1067.13px;top:596.00px;font-size:18.60px;color:#202124;">India</div>
<div class="t" style="left:1521.59px;top:596.00px;font-size:18.60px;color:#202124;">11</div>
<div class="r" style="left:1068px;top:625px;width:473px;height:1px;background:#dadce0"></div>
<div class="r" style="left:1069px;top:623px;width:63.200000000000045px;height:3px;background:#1a73e8;border-radius:1.5px"></div>
<div class="t" style="left:1067.31px;top:637.00px;font-size:18.60px;color:#202124;">Bangladesh</div>
<div class="t" style="left:1530.42px;top:637.00px;font-size:18.60px;color:#202124;">5</div>
<div class="r" style="left:1068px;top:666px;width:473px;height:1px;background:#dadce0"></div>
<div class="r" style="left:1069px;top:664px;width:28.700000000000045px;height:3px;background:#1a73e8;border-radius:1.5px"></div>
<div class="t" style="left:1067.31px;top:678.00px;font-size:18.60px;color:#202124;">Philippines</div>
<div class="t" style="left:1530.42px;top:678.00px;font-size:18.60px;color:#202124;">5</div>
<div class="r" style="left:1069px;top:705px;width:28.700000000000045px;height:3px;background:#1a73e8;border-radius:1.5px"></div>
<div class="t" style="left:1388.60px;top:721.00px;font-size:20.30px;color:#0b57d0;letter-spacing:0.443px;">View realtime</div>
<svg class="r" style="left:1530.5px;top:721.5px" width="18" height="18" viewBox="0 0 18 18"><path d="M1 9H16M9 2L16 9L9 16" fill="none" stroke="#0b57d0" stroke-width="2"/></svg>
<div class="t" style="left:53.47px;top:883.00px;font-size:21.80px;color:#202124;letter-spacing:-1.000px;">Users</div>
<svg class="r" style="left:107.1px;top:890.75px" width="13" height="7.5"><path d="M0 0H13L6.5 7.5Z" fill="#5f6368"/></svg>
<div class="t" style="left:124.18px;top:883.00px;font-size:21.80px;color:#202124;">by</div>
<div class="t" style="left:153.51px;top:883.00px;font-size:21.80px;color:#202124;letter-spacing:0.331px;">City</div>
<svg class="r" style="left:154.6px;top:905.2px" width="37.400000000000006" height="3"><line x1="0" y1="1.5" x2="37.400000000000006" y2="1.5" stroke="#5f6368" stroke-width="1.5" stroke-dasharray="3 2"/></svg>
<div class="card" style="left:444px;top:880px;width:81px;height:37px;border-radius:19.5px;background:#fff;border-color:#d2d5d9"></div>
<svg class="r" style="left:454.3px;top:887.1px" width="25.0" height="25.0" viewBox="-12.5 -12.5 25.0 25.0"><circle r="10.5" fill="none" stroke="#137333" stroke-width="2.2"/><path d="M-5.2 0.3L-1.6 3.9L5.4 -3.4" fill="none" stroke="#137333" stroke-width="2.3"/></svg>
<svg class="r" style="left:499.0px;top:896.75px" width="10" height="5.5"><path d="M0 0H10L5.0 5.5Z" fill="#5f6368"/></svg>
<div class="t" style="left:54.20px;top:948.00px;font-size:17.70px;color:#3c4043;letter-spacing:2.176px;transform:scaleX(0.9000);transform-origin:0 0;">CITY</div>
<div class="t" style="left:468.81px;top:948.00px;font-size:17.70px;color:#3c4043;letter-spacing:1.120px;transform:scaleX(0.9000);transform-origin:0 0;">USERS</div>
<svg class="r" style="left:54px;top:967.1px" width="43" height="3"><line x1="0" y1="1.5" x2="43" y2="1.5" stroke="#5f6368" stroke-width="1.5" stroke-dasharray="3 2"/></svg>
<svg class="r" style="left:469px;top:967.1px" width="59" height="3"><line x1="0" y1="1.5" x2="59" y2="1.5" stroke="#5f6368" stroke-width="1.5" stroke-dasharray="3 2"/></svg>
<div class="r" style="left:55px;top:978px;width:472px;height:1px;background:#dadce0"></div>
<div class="t" style="left:53.58px;top:992.00px;font-size:19.00px;color:#202124;letter-spacing:-0.126px;">Karachi</div>
<div class="t" style="left:489.75px;top:992.00px;font-size:19.00px;color:#202124;letter-spacing:-0.535px;">2.4K</div>
<div class="r" style="left:55px;top:1025px;width:472px;height:1px;background:#dadce0"></div>
<div class="r" style="left:56px;top:1023px;width:27.400000000000006px;height:3px;background:#1a73e8;border-radius:1.5px"></div>
<div class="t" style="left:53.58px;top:1037.00px;font-size:19.00px;color:#202124;letter-spacing:-0.122px;">Lahore</div>
<div class="t" style="left:489.75px;top:1037.00px;font-size:19.00px;color:#202124;letter-spacing:-0.535px;">2.3K</div>
<div class="r" style="left:55px;top:1070px;width:472px;height:1px;background:#dadce0"></div>
<div class="r" style="left:56px;top:1068px;width:27px;height:3px;background:#1a73e8;border-radius:1.5px"></div>
<div class="t" style="left:53.58px;top:1082.00px;font-size:19.00px;color:#202124;letter-spacing:-0.672px;">Dhaka</div>
<div class="t" style="left:489.27px;top:1082.00px;font-size:19.00px;color:#202124;letter-spacing:-0.377px;">1.2K</div>
<div class="r" style="left:55px;top:1115px;width:472px;height:1px;background:#dadce0"></div>
<div class="r" style="left:56px;top:1113px;width:14px;height:3px;background:#1a73e8;border-radius:1.5px"></div>
<div class="t" style="left:53.39px;top:1127.00px;font-size:19.00px;color:#202124;letter-spacing:-0.042px;">Islamabad</div>
<div class="t" style="left:504.47px;top:1127.00px;font-size:19.00px;color:#202124;letter-spacing:-0.465px;">1K</div>
<div class="r" style="left:55px;top:1160px;width:472px;height:1px;background:#dadce0"></div>
<div class="r" style="left:56px;top:1158px;width:11.799999999999997px;height:3px;background:#1a73e8;border-radius:1.5px"></div>
<div class="t" style="left:53.58px;top:1172.00px;font-size:19.00px;color:#202124;letter-spacing:-0.228px;">Faisalabad</div>
<div class="t" style="left:497.14px;top:1172.00px;font-size:19.00px;color:#202124;letter-spacing:-0.463px;">991</div>
<div class="r" style="left:55px;top:1205px;width:472px;height:1px;background:#dadce0"></div>
<div class="r" style="left:56px;top:1203px;width:11px;height:3px;background:#1a73e8;border-radius:1.5px"></div>
<div class="t" style="left:53.58px;top:1217.00px;font-size:19.00px;color:#202124;letter-spacing:0.153px;">Nairobi</div>
<div class="t" style="left:496.05px;top:1217.00px;font-size:19.00px;color:#202124;letter-spacing:0.037px;">773</div>
<div class="r" style="left:55px;top:1250px;width:472px;height:1px;background:#dadce0"></div>
<div class="r" style="left:56px;top:1248px;width:9.200000000000003px;height:3px;background:#1a73e8;border-radius:1.5px"></div>
<div class="t" style="left:53.58px;top:1262.00px;font-size:19.00px;color:#202124;letter-spacing:-0.242px;">Patna</div>
<div class="t" style="left:496.05px;top:1262.00px;font-size:19.00px;color:#202124;letter-spacing:0.037px;">668</div>
<div class="r" style="left:56px;top:1293px;width:7.799999999999997px;height:3px;background:#1a73e8;border-radius:1.5px"></div>
<div class="t" style="left:401.50px;top:1362.00px;font-size:20.30px;color:#0b57d0;letter-spacing:0.500px;">View cities</div>
<svg class="r" style="left:517.5px;top:1363px" width="18" height="18" viewBox="0 0 18 18"><path d="M1 9H16M9 2L16 9L9 16" fill="none" stroke="#0b57d0" stroke-width="2"/></svg>
<div class="t" style="left:616.16px;top:882.00px;font-size:21.80px;color:#202124;letter-spacing:-1.000px;">Users</div>
<svg class="r" style="left:669.8px;top:890.55px" width="13" height="7.5"><path d="M0 0H13L6.5 7.5Z" fill="#5f6368"/></svg>
<div class="t" style="left:686.88px;top:882.00px;font-size:21.80px;color:#202124;">by</div>
<div class="t" style="left:716.21px;top:882.00px;font-size:21.80px;color:#202124;letter-spacing:-0.017px;">Gender</div>
<svg class="r" style="left:717.3px;top:905.0px" width="71.20000000000005" height="3"><line x1="0" y1="1.5" x2="71.20000000000005" y2="1.5" stroke="#5f6368" stroke-width="1.5" stroke-dasharray="3 2"/></svg>
<div class="card" style="left:1006.5px;top:880px;width:81.5px;height:37px;border-radius:19.5px;background:#fff;border-color:#d2d5d9"></div>
<svg class="r" style="left:1015.7px;top:886.2px" width="28" height="26" viewBox="-14 -13 28 26"><path d="M0 -10.5L11.5 9.5H-11.5Z" fill="none" stroke="#bf3f12" stroke-width="2.2" stroke-linejoin="miter"/><rect x="-1.1" y="-3.5" width="2.2" height="6.5" fill="#bf3f12"/><rect x="-1.1" y="4.6" width="2.2" height="2.3" fill="#bf3f12"/></svg>
<svg class="r" style="left:1062.0px;top:896.75px" width="10" height="5.5"><path d="M0 0H10L5.0 5.5Z" fill="#5f6368"/></svg>
<svg class="r" style="left:0;top:0" width="1600" height="1430"><circle cx="854.2" cy="1093.8" r="110.6" fill="none" stroke="#4285f4" stroke-width="35.60000000000001"/><circle cx="854.2" cy="1093.8" r="110.6" fill="none" stroke="#1a65d6" stroke-width="35.60000000000001" stroke-dasharray="421.82 694.92" transform="rotate(-90 854.2 1093.8)"/><circle cx="690.3" cy="1265" r="3.8" fill="#1a65d6"/><circle cx="929" cy="1265" r="3.8" fill="#4285f4"/></svg>
<div class="t" style="left:700.38px;top:1257.00px;font-size:17.00px;color:#3c4043;letter-spacing:1.896px;transform:scaleX(0.9000);transform-origin:0 0;">MALE</div>
<div class="t" style="left:700.04px;top:1281.00px;font-size:31.50px;color:#202124;transform:scaleX(0.9928);transform-origin:0 0;">60.7%</div>
<div class="t" style="left:939.48px;top:1257.00px;font-size:17.00px;color:#3c4043;letter-spacing:0.986px;transform:scaleX(0.9000);transform-origin:0 0;">FEMALE</div>
<div class="t" style="left:939.53px;top:1281.00px;font-size:31.50px;color:#202124;transform:scaleX(0.9271);transform-origin:0 0;">39.3%</div>
<div class="t" style="left:939.40px;top:1362.00px;font-size:20.30px;color:#0b57d0;letter-spacing:0.291px;">View genders</div>
<svg class="r" style="left:1080px;top:1363px" width="18" height="18" viewBox="0 0 18 18"><path d="M1 9H16M9 2L16 9L9 16" fill="none" stroke="#0b57d0" stroke-width="2"/></svg>
<div class="t" style="left:1179.46px;top:882.00px;font-size:21.80px;color:#202124;letter-spacing:-1.000px;">Users</div>
<svg class="r" style="left:1233.1px;top:890.4499999999999px" width="13" height="7.5"><path d="M0 0H13L6.5 7.5Z" fill="#5f6368"/></svg>
<div class="t" style="left:1250.18px;top:882.00px;font-size:21.80px;color:#202124;">by</div>
<div class="t" style="left:1278.64px;top:882.00px;font-size:21.80px;color:#202124;letter-spacing:0.278px;">Interests</div>
<svg class="r" style="left:1280.6px;top:904.9px" width="83.10000000000014" height="3"><line x1="0" y1="1.5" x2="83.10000000000014" y2="1.5" stroke="#5f6368" stroke-width="1.5" stroke-dasharray="3 2"/></svg>
<div class="card" style="left:1456.6px;top:880px;width:82.40000000000009px;height:37px;border-radius:19.5px;background:#fff;border-color:#d2d5d9"></div>
<svg class="r" style="left:1466.1px;top:886.2px" width="28" height="26" viewBox="-14 -13 28 26"><path d="M0 -10.5L11.5 9.5H-11.5Z" fill="none" stroke="#bf3f12" stroke-width="2.2" stroke-linejoin="miter"/><rect x="-1.1" y="-3.5" width="2.2" height="6.5" fill="#bf3f12"/><rect x="-1.1" y="4.6" width="2.2" height="2.3" fill="#bf3f12"/></svg>
<svg class="r" style="left:1512.5px;top:896.75px" width="10" height="5.5"><path d="M0 0H10L5.0 5.5Z" fill="#5f6368"/></svg>
<div class="t" style="left:1179.57px;top:948.00px;font-size:17.70px;color:#3c4043;letter-spacing:1.637px;transform:scaleX(0.9000);transform-origin:0 0;">INTERESTS</div>
<div class="t" style="left:1481.01px;top:948.00px;font-size:17.70px;color:#3c4043;letter-spacing:1.398px;transform:scaleX(0.9000);transform-origin:0 0;">USERS</div>
<svg class="r" style="left:1180px;top:967.2px" width="101" height="3"><line x1="0" y1="1.5" x2="101" y2="1.5" stroke="#5f6368" stroke-width="1.5" stroke-dasharray="3 2"/></svg>
<svg class="r" style="left:1481.2px;top:967.2px" width="60.0" height="3"><line x1="0" y1="1.5" x2="60.0" y2="1.5" stroke="#5f6368" stroke-width="1.5" stroke-dasharray="3 2"/></svg>
<div class="r" style="left:1181px;top:979px;width:359.20000000000005px;height:1px;background:#dadce0"></div>
<div class="t" style="left:1179.58px;top:992.00px;font-size:19.00px;color:#202124;letter-spacing:-0.324px;">Media &amp; Entertainme...</div>
<div class="t" style="left:1508.45px;top:992.00px;font-size:19.00px;color:#202124;letter-spacing:-0.892px;">28K</div>
<div class="r" style="left:1181px;top:1025px;width:359.20000000000005px;height:1px;background:#dadce0"></div>
<div class="r" style="left:1182px;top:1023px;width:355.4000000000001px;height:3px;background:#1a73e8;border-radius:1.5px"></div>
<div class="t" style="left:1179.58px;top:1037.00px;font-size:19.00px;color:#202124;letter-spacing:-0.111px;">News &amp; Politics/Avid...</div>
<div class="t" style="left:1508.45px;top:1037.00px;font-size:19.00px;color:#202124;letter-spacing:-0.892px;">28K</div>
<div class="r" style="left:1181px;top:1070px;width:359.20000000000005px;height:1px;background:#dadce0"></div>
<div class="r" style="left:1182px;top:1068px;width:349px;height:3px;background:#1a73e8;border-radius:1.5px"></div>
<div class="t" style="left:1179.58px;top:1082.00px;font-size:19.00px;color:#202124;letter-spacing:-0.324px;">Media &amp; Entertainme...</div>
<div class="t" style="left:1508.45px;top:1082.00px;font-size:19.00px;color:#202124;letter-spacing:-0.892px;">28K</div>
<div class="r" style="left:1181px;top:1115px;width:359.20000000000005px;height:1px;background:#dadce0"></div>
<div class="r" style="left:1182px;top:1113px;width:348.5px;height:3px;background:#1a73e8;border-radius:1.5px"></div>
<div class="t" style="left:1179.58px;top:1127.00px;font-size:19.00px;color:#202124;letter-spacing:-0.324px;">Media &amp; Entertainme...</div>
<div class="t" style="left:1508.45px;top:1127.00px;font-size:19.00px;color:#202124;letter-spacing:-0.892px;">28K</div>
<div class="r" style="left:1181px;top:1160px;width:359.20000000000005px;height:1px;background:#dadce0"></div>
<div class="r" style="left:1182px;top:1158px;width:346.70000000000005px;height:3px;background:#1a73e8;border-radius:1.5px"></div>
<div class="t" style="left:1180.24px;top:1172.00px;font-size:19.00px;color:#202124;letter-spacing:-0.429px;">Shoppers</div>
<div class="t" style="left:1508.45px;top:1172.00px;font-size:19.00px;color:#202124;letter-spacing:-0.892px;">27K</div>
<div class="r" style="left:1181px;top:1205px;width:359.20000000000005px;height:1px;background:#dadce0"></div>
<div class="r" style="left:1182px;top:1203px;width:344.0999999999999px;height:3px;background:#1a73e8;border-radius:1.5px"></div>
<div class="t" style="left:1180.24px;top:1217.00px;font-size:19.00px;color:#202124;letter-spacing:-0.282px;">Sports &amp; Fitness/Spo...</div>
<div class="t" style="left:1508.45px;top:1217.00px;font-size:19.00px;color:#202124;letter-spacing:-0.892px;">27K</div>
<div class="r" style="left:1181px;top:1250px;width:359.20000000000005px;height:1px;background:#dadce0"></div>
<div class="r" style="left:1182px;top:1248px;width:342.4000000000001px;height:3px;background:#1a73e8;border-radius:1.5px"></div>
<div class="t" style="left:1180.72px;top:1262.00px;font-size:19.00px;color:#202124;letter-spacing:-0.217px;">Technology/Mobile E...</div>
<div class="t" style="left:1508.45px;top:1262.00px;font-size:19.00px;color:#202124;letter-spacing:-0.892px;">27K</div>
<div class="r" style="left:1182px;top:1293px;width:340.70000000000005px;height:3px;background:#1a73e8;border-radius:1.5px"></div>
<div class="t" style="left:1384.30px;top:1362.00px;font-size:20.30px;color:#0b57d0;letter-spacing:0.435px;">View interests</div>
<svg class="r" style="left:1530.5px;top:1362.5px" width="18" height="18" viewBox="0 0 18 18"><path d="M1 9H16M9 2L16 9L9 16" fill="none" stroke="#0b57d0" stroke-width="2"/></svg>
</body></html>
